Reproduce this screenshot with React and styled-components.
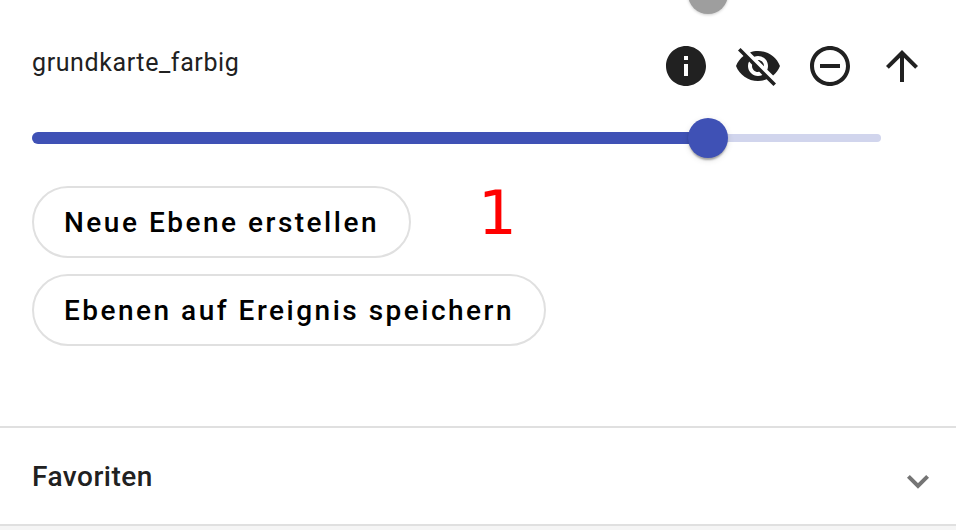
import React from "react";
import styled, { createGlobalStyle } from "styled-components";

const Global = createGlobalStyle`
  * { box-sizing: border-box; }
  body { margin: 0; background: #fff; overflow: hidden; }
`;
const Panel = styled.main`
  width: 956px; height: 530px; overflow: hidden;
  display: flex; flex-direction: column;
  font-family: Roboto, sans-serif; color: #212121; background: #fff;
`;
const PreviousSlider = styled.div`
  height: 30px; flex: none; position: relative;
`;
const Thumb = styled.div`
  position: absolute; left: ${(p) => p.$left}px; top: ${(p) => p.$top}px;
  width: 40px; height: 40px; border-radius: 50%;
  background: ${(p) => p.$color};
  box-shadow: ${(p) => p.$muted
    ? "0 1px 3px rgba(0,0,0,.2)"
    : "0 4px 2px -2px rgba(0,0,0,.2), 0 2px 2px rgba(0,0,0,.14), 0 2px 6px rgba(0,0,0,.12)"};
`;
const LayerRow = styled.div`
  height: 72px; flex: none; padding: 0 30px 0 32px;
  display: flex; justify-content: space-between; align-items: center;
`;
const LayerName = styled.span`
  font-size: 25px; line-height: 36px; letter-spacing: .6px; margin-top: -6px;
`;
const Actions = styled.div`
  display: flex; gap: 24px;
`;
const IconButton = styled.button`
  width: 48px; height: 48px; padding: 0; border: 0; background: none; color: #212121;
  svg { display: block; width: 48px; height: 48px; fill: currentColor; }
`;
const Slider = styled.div`
  position: relative; height: 72px; flex: none; margin: 0 75px 0 32px;
  display: flex; align-items: center;
`;
const Track = styled.div`
  width: 100%; height: 8px; border-radius: 4px; background: #d1d5ed;
`;
const Fill = styled.div`
  width: 676px; height: 12px; border-radius: 6px; background: #3f51b5;
  position: absolute; left: 0; top: 30px;
`;
const Buttons = styled.div`
  position: relative; flex: none; height: 252px; padding: 12px 32px 0;
  display: flex; flex-direction: column; align-items: flex-start; gap: 16px;
`;
const PillButton = styled.button`
  width: ${(p) => p.$width}px; height: 72px; padding: 2px 0 0; border: 2px solid #e0e0e0; border-radius: 36px;
  background: #fff; color: #000; font: 500 28px/64px Roboto, sans-serif; letter-spacing: 2.5px;
  display: flex; align-items: center; justify-content: center; white-space: nowrap;
`;
const Marker = styled.span`
  position: absolute; left: 478px; top: 1px; color: #f00;
  font: 61px/76px "DejaVu Sans", sans-serif;
`;
const Favorites = styled.section`
  height: 100px; flex: none; border-top: 2px solid #e0e0e0; border-bottom: 2px solid #e0e0e0;
  padding: 0 26px 0 32px; display: flex; align-items: center; justify-content: space-between;
`;
const Title = styled.h2`
  margin: 2px 0 0; font-size: 28px; font-weight: 500; line-height: 36px; letter-spacing: .5px;
`;
const Chevron = styled.svg`
  width: 24px; height: 16px; fill: none; stroke: #757575; stroke-width: 4; margin-top: 10px;
`;
const NextPanel = styled.div`
  flex: 1; background: #f5f5f5;
`;

const icons = [
  ["Info", "M12 2C6.48 2 2 6.48 2 12s4.48 10 10 10 10-4.48 10-10S17.52 2 12 2zm1 15h-2v-6h2v6zm0-8h-2V7h2v2z"],
  ["Ausblenden", "M12 7c2.76 0 5 2.24 5 5 0 .65-.13 1.26-.36 1.83l2.92 2.92c1.51-1.26 2.7-2.89 3.43-4.75-1.73-4.39-6-7.5-11-7.5-1.4 0-2.74.25-3.98.7l2.16 2.16C10.74 7.13 11.35 7 12 7zM2 4.27l2.28 2.28.46.46C3.08 8.3 1.78 10.02 1 12c1.73 4.39 6 7.5 11 7.5 1.55 0 3.03-.3 4.38-.84l.42.42L19.73 22 21 20.73 3.27 3 2 4.27zM7.53 9.8l1.55 1.55c-.05.21-.08.43-.08.65 0 1.66 1.34 3 3 3 .22 0 .44-.03.65-.08l1.55 1.55c-.67.33-1.41.53-2.2.53-2.76 0-5-2.24-5-5 0-.79.2-1.53.53-2.2zm4.31-.78l3.15 3.15.02-.16c0-1.66-1.34-3-3-3l-.17.01z"],
  ["Entfernen", "M7 11v2h10v-2H7zm5-9C6.48 2 2 6.48 2 12s4.48 10 10 10 10-4.48 10-10S17.52 2 12 2zm0 18c-4.41 0-8-3.59-8-8s3.59-8 8-8 8 3.59 8 8-3.59 8-8 8z"],
  ["Nach oben", "M4 12l1.41 1.41L11 7.83V20h2V7.83l5.58 5.59L20 12l-8-8-8 8z"],
];

export default function App() {
  return (
    <Panel>
      <Global />
      <PreviousSlider><Thumb $left={688} $top={-26} $color="#9e9e9e" $muted /></PreviousSlider>
      <LayerRow>
        <LayerName>grundkarte_farbig</LayerName>
        <Actions>
          {icons.map(([label, d]) => (
            <IconButton key={label} aria-label={label}>
              <svg viewBox="0 0 24 24"><path d={d} /></svg>
            </IconButton>
          ))}
        </Actions>
      </LayerRow>
      <Slider>
        <Track />
        <Fill />
        <Thumb $left={656} $top={16} $color="#3f51b5" />
      </Slider>
      <Buttons>
        <PillButton $width={379}>Neue Ebene erstellen</PillButton>
        <PillButton $width={514}>Ebenen auf Ereignis speichern</PillButton>
        <Marker>1</Marker>
      </Buttons>
      <Favorites>
        <Title>Favoriten</Title>
        <Chevron viewBox="0 0 24 16"><path d="M2.4 3.4 12 13 21.6 3.4" /></Chevron>
      </Favorites>
      <NextPanel />
    </Panel>
  );
}
